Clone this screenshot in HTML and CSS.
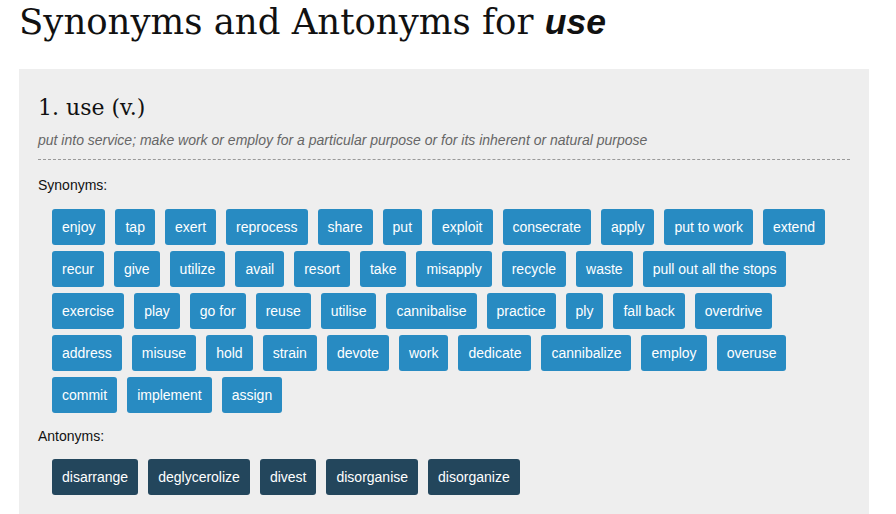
FILE: index.html
```html
<!DOCTYPE html>
<html lang="en">
<head>
    <meta charset="UTF-8">
    <meta name="viewport" content="width=device-width, initial-scale=1.0">
    <title>Synonyms and Antonyms for use</title>
    <link rel="stylesheet" href="styles.css">
</head>
<body>

    <h1>Synonyms and Antonyms for <em>use</em></h1>

    <div class="sense">
        <h2>1. use (v.)</h2>
        <p class="definition">put into service; make work or employ for a particular purpose or for its inherent or natural purpose</p>

        <p class="label">Synonyms:</p>
        <div class="words">
            <a class="word" href="#">enjoy</a>
            <a class="word" href="#">tap</a>
            <a class="word" href="#">exert</a>
            <a class="word" href="#">reprocess</a>
            <a class="word" href="#">share</a>
            <a class="word" href="#">put</a>
            <a class="word" href="#">exploit</a>
            <a class="word" href="#">consecrate</a>
            <a class="word" href="#">apply</a>
            <a class="word" href="#">put to work</a>
            <a class="word" href="#">extend</a>
            <a class="word" href="#">recur</a>
            <a class="word" href="#">give</a>
            <a class="word" href="#">utilize</a>
            <a class="word" href="#">avail</a>
            <a class="word" href="#">resort</a>
            <a class="word" href="#">take</a>
            <a class="word" href="#">misapply</a>
            <a class="word" href="#">recycle</a>
            <a class="word" href="#">waste</a>
            <a class="word" href="#">pull out all the stops</a>
            <a class="word" href="#">exercise</a>
            <a class="word" href="#">play</a>
            <a class="word" href="#">go for</a>
            <a class="word" href="#">reuse</a>
            <a class="word" href="#">utilise</a>
            <a class="word" href="#">cannibalise</a>
            <a class="word" href="#">practice</a>
            <a class="word" href="#">ply</a>
            <a class="word" href="#">fall back</a>
            <a class="word" href="#">overdrive</a>
            <a class="word" href="#">address</a>
            <a class="word" href="#">misuse</a>
            <a class="word" href="#">hold</a>
            <a class="word" href="#">strain</a>
            <a class="word" href="#">devote</a>
            <a class="word" href="#">work</a>
            <a class="word" href="#">dedicate</a>
            <a class="word" href="#">cannibalize</a>
            <a class="word" href="#">employ</a>
            <a class="word" href="#">overuse</a>
            <a class="word" href="#">commit</a>
            <a class="word" href="#">implement</a>
            <a class="word" href="#">assign</a>
        </div>

        <p class="label antonyms-label">Antonyms:</p>
        <div class="words">
            <a class="word antonym" href="#">disarrange</a>
            <a class="word antonym" href="#">deglycerolize</a>
            <a class="word antonym" href="#">divest</a>
            <a class="word antonym" href="#">disorganise</a>
            <a class="word antonym" href="#">disorganize</a>
        </div>
    </div>

</body>
</html>
```

FILE: styles.css
```css
body {
    font-family: "Liberation Sans", Arial, sans-serif;
    font-size: 14px;
    margin: 0 27px 0 19px;
    background: #fff;
    color: #111;
}
h1 {
    font-family: "DejaVu Serif", serif;
    font-weight: normal;
    font-size: 35.5px;
    line-height: 44px;
    margin: 0 0 25px;
    color: #111;
}
h1 em {
    font-family: "Liberation Sans", Arial, sans-serif;
    font-weight: bold;
    font-style: italic;
}
.sense {
    background-color: #eee;
    padding: 24px 19px 20px;
}
h2 {
    font-family: "DejaVu Serif", serif;
    font-weight: normal;
    font-size: 22px;
    line-height: 30px;
    margin: 0;
}
.definition {
    font-style: italic;
    color: #666;
    margin: 9px 0 0;
    padding-bottom: 11px;
    border-bottom: 1px dashed #999;
}
.label {
    margin: 16px 0 0;
    line-height: 18px;
}
.antonyms-label {
    margin-top: 14px;
}
.words {
    display: flex;
    flex-wrap: wrap;
    gap: 6px 10px;
    padding: 15px 0 0 14px;
}
.antonyms-label + .words {
    padding-top: 14px;
}
.word {
    display: block;
    background-color: #288bc2;
    color: #fff;
    text-decoration: none;
    line-height: 36px;
    padding: 0 10px;
    border-radius: 3px;
}
.antonym {
    background-color: #23465c;
}
```
